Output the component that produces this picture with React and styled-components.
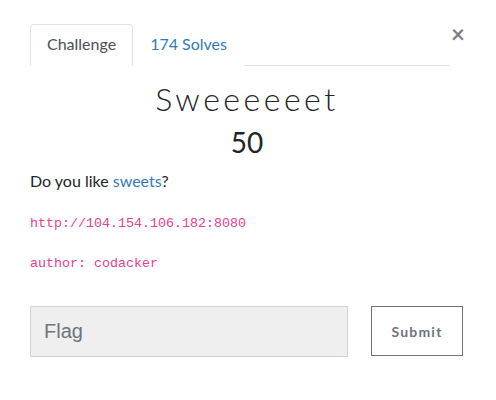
import React from 'react';
import styled, { createGlobalStyle } from 'styled-components';

const GlobalStyle = createGlobalStyle`
  html, body {
    margin: 0;
    padding: 0;
    background: #ffffff;
  }
  body {
    font-family: Lato, "Liberation Sans", sans-serif;
    font-size: 16px;
    line-height: 24px;
    color: #212529;
  }
`;

const Modal = styled.div`
  width: 496px;
  box-sizing: border-box;
  padding: 24px 32px 40px 30px;
`;

const Header = styled.div`
  display: flex;
  align-items: flex-start;
`;

const Tabs = styled.ul`
  display: flex;
  flex-shrink: 0;
  width: 420px;
  margin: 0;
  padding: 0;
  list-style: none;
  border-bottom: 1px solid #dee2e6;
`;

const Tab = styled.li`
  margin-bottom: -1px;
  padding: 7px 16px 9px;
  border: 1px solid ${props => (props.active ? '#dee2e6' : 'transparent')};
  border-bottom-color: ${props => (props.active ? '#ffffff' : 'transparent')};
  border-radius: 4px 4px 0 0;
  background: #ffffff;
  color: ${props => (props.active ? '#495057' : '#337ab7')};
  line-height: 24px;
  cursor: pointer;
`;

const Close = styled.button`
  margin: -2px 0 0 auto;
  padding: 0 0 0 1px;
  border: 0;
  background: transparent;
  font-family: Lato, "Liberation Sans", sans-serif;
  font-size: 24px;
  font-weight: 700;
  line-height: 24px;
  color: #000000;
  opacity: 0.5;
  cursor: pointer;
`;

const Title = styled.h2`
  margin: 14px 0 0;
  text-align: center;
  font-family: Lato, "Liberation Sans", sans-serif;
  font-size: 32px;
  font-weight: 300;
  line-height: 38px;
  letter-spacing: 3.5px;
  color: #212529;
`;

const Points = styled.h3`
  margin: 7px 0 0;
  text-align: center;
  font-size: 28px;
  font-weight: 400;
  line-height: 34px;
  color: #212529;
`;

const Description = styled.div`
  margin-top: 10px;
`;

const Para = styled.p`
  margin: 0 0 16px;
`;

const Link = styled.a`
  color: #337ab7;
  text-decoration: none;
`;

const Code = styled.code`
  font-family: "Liberation Mono", monospace;
  font-size: 13.33px;
  line-height: 1;
  color: #e83e8c;
`;

const Form = styled.form`
  display: grid;
  grid-template-columns: 318px 92px;
  justify-content: space-between;
  align-items: start;
  margin-top: 33px;
  width: 433px;
`;

const FlagInput = styled.input`
  box-sizing: border-box;
  height: 51px;
  padding: 0 13px;
  border: 1px solid #ced4da;
  background: #efefef;
  font-family: "Liberation Sans", Arial, sans-serif;
  font-size: 20px;
  color: #495057;
  outline: none;

  &::placeholder {
    color: #6c757d;
  }
`;

const SubmitButton = styled.button`
  box-sizing: border-box;
  height: 50px;
  border: 1px solid #6c757d;
  background: #ffffff;
  font-family: Lato, "Liberation Sans", sans-serif;
  font-size: 14px;
  font-weight: 700;
  letter-spacing: 1.2px;
  color: #6c757d;
  cursor: pointer;
`;

export default function App() {
  return (
    <>
      <GlobalStyle />
      <Modal>
        <Header>
          <Tabs>
            <Tab active>Challenge</Tab>
            <Tab>174 Solves</Tab>
          </Tabs>
          <Close aria-label="Close">×</Close>
        </Header>
        <Title>Sweeeeeet</Title>
        <Points>50</Points>
        <Description>
          <Para>
            Do you like <Link href="#">sweets</Link>?
          </Para>
          <Para>
            <Code>http://104.154.106.182:8080</Code>
          </Para>
          <Para>
            <Code>author: codacker</Code>
          </Para>
        </Description>
        <Form onSubmit={e => e.preventDefault()}>
          <FlagInput placeholder="Flag" />
          <SubmitButton type="submit">Submit</SubmitButton>
        </Form>
      </Modal>
    </>
  );
}
